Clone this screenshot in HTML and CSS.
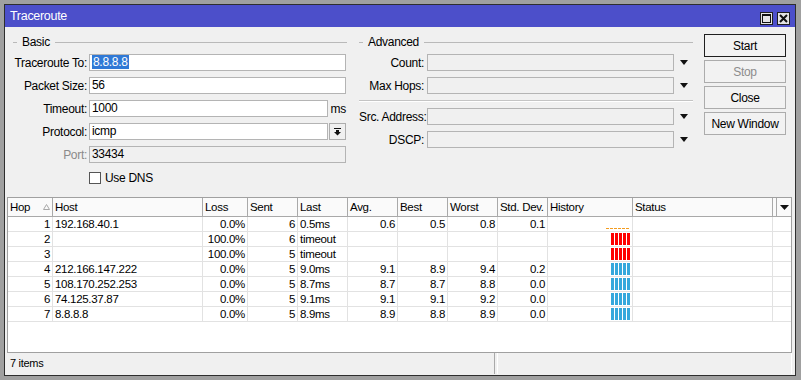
FILE: index.html
```html
<!DOCTYPE html>
<html lang="en">
<head>
    <meta charset="UTF-8">
    <title>Traceroute</title>
    <link rel="stylesheet" href="styles.css">
</head>
<body>
    <div class="window">
        <div class="titlebar">
            <span class="title">Traceroute</span>
            <span class="tb-btn">
                <svg width="9" height="9" viewBox="0 0 9 9"><rect x="0.5" y="0.5" width="8" height="8" fill="none" stroke="#111"/><rect x="0" y="0" width="9" height="2" fill="#111"/></svg>
            </span>
            <span class="tb-btn">
                <svg width="9" height="9" viewBox="0 0 9 9"><path d="M1 1L8 8M8 1L1 8" stroke="#111" stroke-width="2"/></svg>
            </span>
        </div>

        <div class="top">
            <div class="group basic">
                <div class="legend">Basic</div>
                <div class="form">
                    <label>Traceroute To:</label>
                    <div class="input"><span class="sel">8.8.8.8</span></div>

                    <label>Packet Size:</label>
                    <div class="input">56</div>

                    <label>Timeout:</label>
                    <div class="field">
                        <div class="input short">1000</div>
                        <span class="unit">ms</span>
                    </div>

                    <label>Protocol:</label>
                    <div class="field">
                        <div class="input short">icmp</div>
                        <span class="drop-btn">
                            <svg width="7" height="8" viewBox="0 0 7 8"><rect x="0" y="0" width="7" height="1" fill="#111"/><rect x="2" y="2" width="3" height="2" fill="#111"/><polygon points="0,4 7,4 3.5,7.5" fill="#111"/></svg>
                        </span>
                    </div>

                    <label class="disabled">Port:</label>
                    <div class="input off">33434</div>

                    <span></span>
                    <div class="check">
                        <span class="box"></span>
                        <span>Use DNS</span>
                    </div>
                </div>
            </div>

            <div class="group advanced">
                <div class="legend">Advanced</div>
                <div class="form adv">
                    <label>Count:</label>
                    <div class="input off"></div>
                    <svg class="arrow" width="8" height="5" viewBox="0 0 8 5"><polygon points="0,0 8,0 4,5" fill="#111"/></svg>

                    <label>Max Hops:</label>
                    <div class="input off"></div>
                    <svg class="arrow" width="8" height="5" viewBox="0 0 8 5"><polygon points="0,0 8,0 4,5" fill="#111"/></svg>

                    <div class="sep"></div>

                    <label>Src. Address:</label>
                    <div class="input off"></div>
                    <svg class="arrow" width="8" height="5" viewBox="0 0 8 5"><polygon points="0,0 8,0 4,5" fill="#111"/></svg>

                    <label>DSCP:</label>
                    <div class="input off"></div>
                    <svg class="arrow" width="8" height="5" viewBox="0 0 8 5"><polygon points="0,0 8,0 4,5" fill="#111"/></svg>
                </div>
            </div>

            <div class="buttons">
                <div class="btn default">Start</div>
                <div class="btn disabled">Stop</div>
                <div class="btn">Close</div>
                <div class="btn">New Window</div>
            </div>
        </div>

        <div class="grid">
            <div class="row head">
                <div class="sortable">Hop
                    <svg width="7" height="6" viewBox="0 0 7 6"><polygon points="3.5,0.5 6.5,5.5 0.5,5.5" fill="none" stroke="#a8a8a8"/></svg>
                </div>
                <div>Host</div>
                <div>Loss</div>
                <div>Sent</div>
                <div>Last</div>
                <div>Avg.</div>
                <div>Best</div>
                <div>Worst</div>
                <div>Std. Dev.</div>
                <div>History</div>
                <div>Status</div>
                <div class="menu">
                    <span class="menu-btn">
                        <svg width="9" height="5" viewBox="0 0 9 5"><polygon points="0,0 9,0 4.5,5" fill="#111"/></svg>
                    </span>
                </div>
            </div>

            <div class="row">
                <div class="num">1</div><div>192.168.40.1</div><div class="num">0.0%</div><div class="num">6</div><div>0.5ms</div>
                <div class="num">0.6</div><div class="num">0.5</div><div class="num">0.8</div><div class="num">0.1</div>
                <div class="history"><span class="dash"></span></div><div></div><div></div>
            </div>
            <div class="row">
                <div class="num">2</div><div></div><div class="num">100.0%</div><div class="num">6</div><div>timeout</div>
                <div></div><div></div><div></div><div></div>
                <div class="history red"><i></i><i></i><i></i><i></i><i></i></div><div></div><div></div>
            </div>
            <div class="row">
                <div class="num">3</div><div></div><div class="num">100.0%</div><div class="num">5</div><div>timeout</div>
                <div></div><div></div><div></div><div></div>
                <div class="history red"><i></i><i></i><i></i><i></i><i></i></div><div></div><div></div>
            </div>
            <div class="row">
                <div class="num">4</div><div>212.166.147.222</div><div class="num">0.0%</div><div class="num">5</div><div>9.0ms</div>
                <div class="num">9.1</div><div class="num">8.9</div><div class="num">9.4</div><div class="num">0.2</div>
                <div class="history"><i></i><i></i><i></i><i></i><i></i></div><div></div><div></div>
            </div>
            <div class="row">
                <div class="num">5</div><div>108.170.252.253</div><div class="num">0.0%</div><div class="num">5</div><div>8.7ms</div>
                <div class="num">8.7</div><div class="num">8.7</div><div class="num">8.8</div><div class="num">0.0</div>
                <div class="history"><i></i><i></i><i></i><i></i><i></i></div><div></div><div></div>
            </div>
            <div class="row">
                <div class="num">6</div><div>74.125.37.87</div><div class="num">0.0%</div><div class="num">5</div><div>9.1ms</div>
                <div class="num">9.1</div><div class="num">9.1</div><div class="num">9.2</div><div class="num">0.0</div>
                <div class="history"><i></i><i></i><i></i><i></i><i></i></div><div></div><div></div>
            </div>
            <div class="row">
                <div class="num">7</div><div>8.8.8.8</div><div class="num">0.0%</div><div class="num">5</div><div>8.9ms</div>
                <div class="num">8.9</div><div class="num">8.8</div><div class="num">8.9</div><div class="num">0.0</div>
                <div class="history"><i></i><i></i><i></i><i></i><i></i></div><div></div><div></div>
            </div>
        </div>

        <div class="statusbar">
            <div class="panel">7 items</div>
            <div class="panel"></div>
        </div>
    </div>
</body>
</html>
```

FILE: styles.css
```css
body {
    margin: 0;
    background-color: #a0a0a0;
    font-family: "Liberation Sans", Arial, sans-serif;
    font-size: 12px;
    letter-spacing: -0.3px;
    color: #000;
}
.window {
    margin: 4px 5px 4px 4px;
    height: 370px;
    border: 1px solid #2e2e2e;
    background-color: #f0f0f0;
    display: flex;
    flex-direction: column;
}

/* title bar */
.titlebar {
    height: 22px;
    flex-shrink: 0;
    display: flex;
    padding: 0 5px;
    background-color: #4c4fca;
    color: #fff;
}
.title {
    flex: 1;
    font-size: 12.5px;
    padding-top: 4px;
}
.tb-btn {
    width: 11px;
    height: 11px;
    margin: 7px 0 0 4px;
    border: 1px solid #1e1e1e;
    background-color: #e4e4e4;
    display: flex;
    align-items: center;
    justify-content: center;
}

/* top form */
.top {
    height: 170px;
    flex-shrink: 0;
    box-sizing: border-box;
    display: flex;
    padding: 8px 0 0 3px;
}
.basic {
    width: 339px;
}
.advanced {
    width: 334px;
    margin-left: 12px;
}
.legend {
    display: flex;
    align-items: center;
    height: 14px;
    margin-bottom: 5px;
}
.basic .legend {
    margin-left: 5px;
}
.legend::before {
    content: "";
    width: 4px;
    border-top: 1px solid #b9b9b9;
    margin-right: 5px;
}
.legend::after {
    content: "";
    flex: 1;
    border-top: 1px solid #b9b9b9;
    margin-left: 5px;
}
.form {
    display: grid;
    grid-template-columns: 79px 257px;
    grid-auto-rows: 17px;
    column-gap: 2px;
    row-gap: 6px;
    align-items: center;
}
.form.adv {
    grid-template-columns: 65px 247px 16px;
    grid-template-rows: 17px 17px 2px 17px 17px;
    column-gap: 3px;
}
.form label {
    text-align: right;
    white-space: nowrap;
}
.form label.disabled {
    color: #8a8a8a;
}
.input {
    height: 17px;
    box-sizing: border-box;
    border: 1px solid #b4b4b4;
    background-color: #fff;
    padding: 0 2px;
    line-height: 15px;
}
.input.off {
    background-color: #f0f0f0;
}
.input.short {
    width: 239px;
}
.sel {
    background-color: #3079d6;
    color: #fff;
    padding: 0 1px;
}
.field {
    display: flex;
    align-items: center;
}
.unit {
    margin-left: 3px;
}
.drop-btn {
    width: 17px;
    height: 17px;
    box-sizing: border-box;
    margin-left: 1px;
    border: 1px solid #adadad;
    background-color: #f0f0f0;
    display: flex;
    align-items: center;
    justify-content: center;
}
.arrow {
    margin-left: 3px;
}
.sep {
    grid-column: 1 / -1;
    height: 0;
    border-top: 1px solid #c4c4c4;
    border-bottom: 1px solid #fff;
}
.check {
    display: flex;
    align-items: center;
    gap: 4px;
}
.check .box {
    width: 12px;
    height: 12px;
    box-sizing: border-box;
    border: 1px solid #555;
    background-color: #fff;
}

/* buttons */
.buttons {
    width: 82px;
    margin: -1px 0 0 11px;
    display: flex;
    flex-direction: column;
    gap: 3px;
}
.btn {
    height: 23px;
    box-sizing: border-box;
    border: 1px solid #acacac;
    background-color: #f2f2f2;
    display: flex;
    align-items: center;
    justify-content: center;
}
.btn.default {
    border-color: #1f1f1f;
}
.btn.disabled {
    color: #8c8c8c;
}

/* list */
.grid {
    flex: 1;
    margin: 0 3px 0 2px;
    border: 1px solid #a0a0a0;
    background-color: #fff;
    font-size: 11.5px;
}
.row {
    display: grid;
    grid-template-columns: 45px 150px 45px 50px 50px 50px 50px 50px 50px 85px 140px 1fr;
    height: 15px;
}
.row > div {
    box-sizing: border-box;
    border-right: 1px solid #e2e2e2;
    border-bottom: 1px solid #e2e2e2;
    padding: 0 2px;
    line-height: 14px;
    white-space: nowrap;
    overflow: hidden;
}
.row > div:last-child {
    border-right: none;
}
.row .num {
    text-align: right;
}
.row.head {
    height: 19px;
    background-color: #fafafa;
}
.row.head > div {
    border-color: #a9a9a9;
    line-height: 18px;
}
.sortable {
    display: flex;
    align-items: center;
    justify-content: space-between;
}
.row.head > .menu {
    display: flex;
    justify-content: flex-end;
    padding: 0;
}
.menu-btn {
    width: 14px;
    border-left: 1px solid #a9a9a9;
    display: flex;
    align-items: center;
    justify-content: center;
}
.row > .history {
    display: flex;
    justify-content: flex-end;
    align-items: flex-end;
    gap: 1px;
    padding: 0 2px 1px 0;
}
.history i {
    width: 3px;
    height: 12px;
    background-color: #35a8dc;
}
.history.red i {
    background-color: #ff0000;
}
.history .dash {
    width: 24px;
    height: 1px;
    margin-bottom: 1px;
    background-image: repeating-linear-gradient(90deg, #f39c1f 0 3px, transparent 3px 4px);
}

/* status bar */
.statusbar {
    height: 22px;
    flex-shrink: 0;
    display: flex;
    padding: 0 3px 1px 2px;
    box-sizing: border-box;
    font-size: 11px;
}
.panel {
    flex: 1;
    padding-left: 3px;
    line-height: 21px;
    border-right: 1px solid #a9a9a9;
}
.panel:first-child {
    flex: 0 0 484px;
    margin-right: 2px;
}
.panel:last-child {
    border-left: 1px solid #fff;
    border-right: 1px solid #fff;
}
```
